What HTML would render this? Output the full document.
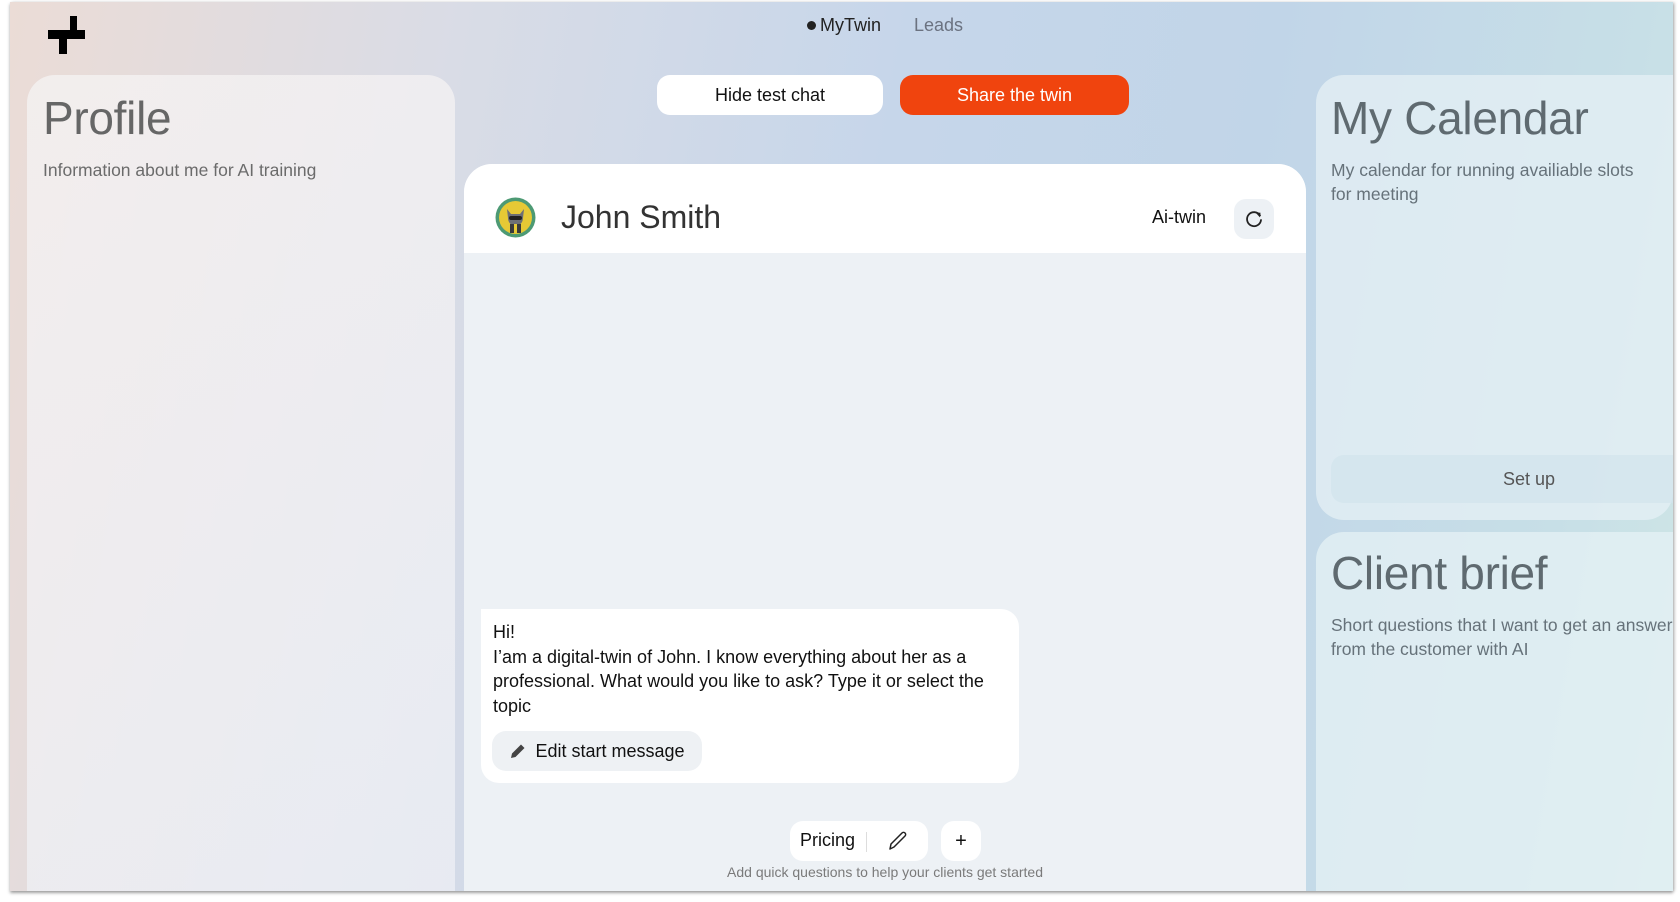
<!DOCTYPE html>
<html><head><meta charset="utf-8"><style>
*{box-sizing:border-box;margin:0;padding:0}
html,body{width:1680px;height:902px;overflow:hidden}
body{background:#fff;font-family:"Liberation Sans",sans-serif;position:relative}
#frame{position:absolute;left:10px;top:2px;width:1663px;height:889px;overflow:hidden;
background:linear-gradient(100deg,#ebdcd6 0%,#d9dce6 25%,#c6d6ea 50%,#c1d5e8 70%,#c7dfe7 90%,#cfe6e6 100%);
box-shadow:0 2px 3px rgba(0,0,0,.35),2px 0 3px rgba(0,0,0,.15)}
.abs{position:absolute}
.card{position:absolute;border-radius:28px;background:rgba(255,255,255,.55)}
h1{font-weight:400;color:#666;font-size:46px;letter-spacing:-.3px}
.sub{font-size:17.5px;color:#6b6b6b;line-height:24px}
.btn{position:absolute;border-radius:13px;display:flex;align-items:center;justify-content:center;font-size:18px}
</style></head><body>
<div id="frame">
 <svg class="abs" style="left:38px;top:14px" width="38" height="38" viewBox="0 0 38 38"><path d="M22 0h7v14h8v9H19v15h-8V23H0v-9h22z" fill="#000"/></svg>
 <div class="abs" style="left:797px;top:13px;font-size:18px;color:#222"><span style="display:inline-block;width:9px;height:9px;border-radius:50%;background:#222;margin-right:4px;vertical-align:1px"></span>MyTwin</div>
 <div class="abs" style="left:904px;top:13px;font-size:18px;color:#6b7280">Leads</div>

 <div class="card" style="left:17px;top:73px;width:428px;height:816px;border-radius:28px 28px 0 0;background:linear-gradient(160deg,rgba(245,242,242,.8),rgba(238,240,246,.75))">
  <h1 class="abs" style="left:16px;top:16px">Profile</h1>
  <div class="sub abs" style="left:16px;top:83px">Information about me for AI training</div>
 </div>

 <div class="btn" style="left:647px;top:73px;width:226px;height:40px;background:#fff;color:#111">Hide test chat</div>
 <div class="btn" style="left:890px;top:73px;width:229px;height:40px;background:#f0440e;color:#fff">Share the twin</div>

 <div class="abs" style="left:454px;top:162px;width:842px;height:727px;border-radius:28px 28px 0 0;background:#edf1f5;overflow:hidden">
  <div class="abs" style="left:0;top:0;width:842px;height:89px;background:#fff"></div>
  <svg class="abs" style="left:31px;top:33px" width="41" height="41" viewBox="0 0 41 41"><circle cx="20.5" cy="20.5" r="20" fill="#4d9a74"/><circle cx="20.5" cy="20.5" r="16.5" fill="#e6c935"/><path d="M12 12l4 5h9l4-5-1 9c0 5-4 8-7.5 8S13 26 13 21z" fill="#6d6f75"/><rect x="14" y="19" width="13" height="4" rx="2" fill="#222"/><rect x="15" y="27" width="11" height="9" fill="#3a3a3a"/><rect x="19" y="27" width="3" height="9" fill="#e6c935"/></svg>
  <div class="abs" style="left:97px;top:35px;font-size:32px;color:#333">John Smith</div>
  <div class="abs" style="left:688px;top:43px;font-size:18px;color:#111">Ai-twin</div>
  <div class="abs" style="left:770px;top:35px;width:40px;height:40px;border-radius:12px;background:#edf1f5"></div>
  <svg class="abs" style="left:780px;top:45px" width="20" height="20" viewBox="0 0 20 20"><path d="M16 6.5A7 7 0 1 0 17 11" fill="none" stroke="#222" stroke-width="1.8" stroke-linecap="round"/><path d="M11.5 3.5l5 .3-.6 4.6z" fill="#222"/></svg>

  <div class="abs" style="left:17px;top:445px;width:538px;height:174px;background:#fff;border-radius:0 18px 18px 18px"></div>
  <div class="abs" style="left:29px;top:456px;width:520px;font-size:18px;line-height:24.6px;color:#111">Hi!<br>I’am a digital-twin of John. I know everything about her as a professional. What would you like to ask? Type it or select the topic</div>
  <div class="btn" style="left:28px;top:567px;width:210px;height:40px;background:#eef1f4;color:#111;border-radius:14px">
   <svg width="18" height="18" viewBox="0 0 18 18" style="margin-right:8px"><path d="M2 16l1-4.5L12 2.5l3.5 3.5-9 9z" fill="#444"/></svg>Edit start message</div>

  <div class="abs" style="left:326px;top:657px;width:138px;height:40px;background:#fff;border-radius:13px"></div>
  <div class="abs" style="left:336px;top:666px;font-size:18px;color:#111">Pricing</div>
  <div class="abs" style="left:402px;top:668px;width:1px;height:20px;background:#ddd"></div>
  <svg class="abs" style="left:422px;top:665px" width="24" height="24" viewBox="0 0 24 24"><path d="M4 20l1-5L16 4a2.1 2.1 0 0 1 3 3L8 18z" fill="none" stroke="#222" stroke-width="1.5" stroke-linejoin="round"/></svg>
  <div class="btn" style="left:477px;top:657px;width:40px;height:40px;background:#fff;font-size:20px;color:#111">+</div>
  <div class="abs" style="left:0;width:842px;top:700px;text-align:center;font-size:14px;color:#7a7a7a">Add quick questions to help your clients get started</div>
 </div>

 <div class="card" style="left:1306px;top:73px;width:357px;height:445px;border-radius:28px 0 28px 28px;background:rgba(230,240,245,.75)">
  <h1 class="abs" style="left:15px;top:16px;color:#5f6a70">My Calendar</h1>
  <div class="sub abs" style="left:15px;top:83px;width:315px;color:#66727a">My calendar for running availiable slots for meeting</div>
  <div class="btn" style="left:15px;top:380px;width:342px;height:48px;border-radius:13px 0 0 13px;background:rgba(210,228,236,.7);color:#555;font-size:18px;justify-content:flex-start;padding-left:172px">Set up</div>
 </div>
 <div class="card" style="left:1306px;top:530px;width:357px;height:359px;border-radius:28px 0 0 0;background:rgba(230,242,245,.75);overflow:hidden">
  <h1 class="abs" style="left:15px;top:14px;color:#5f6a70">Client brief</h1>
  <div class="sub abs" style="left:15px;top:81px;width:400px;color:#66727a;white-space:nowrap">Short questions that I want to get an answer<br>from the customer with AI</div>
 </div>
</div>
</body></html>
